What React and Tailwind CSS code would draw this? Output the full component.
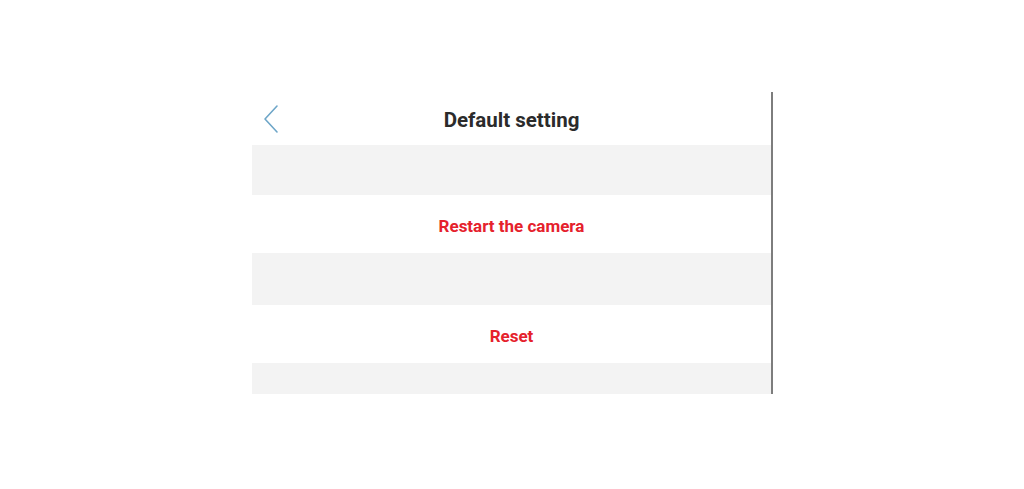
export default function App() {
  return (
    <div className="h-[489px] w-full bg-white pt-[92px] pl-[252px]" style={{ fontFamily: "Roboto, 'Liberation Sans', sans-serif" }}>
      <div className="flex w-[521px] flex-col border-r-2 border-[#7d7d7d]">
        {/* header */}
        <div className="relative flex h-[53px] items-center justify-center pt-[3px]">
          <button className="absolute left-[9px] top-[12px] flex h-[30px] w-[20px] items-center justify-center">
            <svg width="18" height="30" viewBox="0 0 18 30" fill="none">
              <path d="M15 2 L3 15 L15 28" stroke="#6ea6c8" strokeWidth="1.6" strokeLinecap="round" strokeLinejoin="round" />
            </svg>
          </button>
          <h1 className="text-[20.5px] font-bold text-[#2b2b2b]">Default setting</h1>
        </div>
        <div className="h-[50px] bg-[#f3f3f3]" />
        <div className="flex h-[58px] items-center justify-center bg-white pt-[6px]">
          <span className="text-[17px] font-bold text-[#e5212c]">Restart the camera</span>
        </div>
        <div className="h-[52px] bg-[#f3f3f3]" />
        <div className="flex h-[58px] items-center justify-center bg-white pt-[5px]">
          <span className="text-[17px] font-bold text-[#e5212c]">Reset</span>
        </div>
        <div className="h-[31px] bg-[#f3f3f3]" />
      </div>
    </div>
  );
}
